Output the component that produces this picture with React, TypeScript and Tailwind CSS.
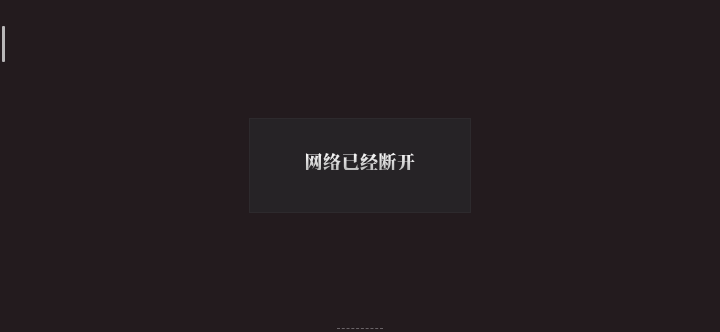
import React from "react";

export default function App() {
  return (
    <div className="relative w-[720px] h-[332px] bg-[#231b1e] overflow-hidden flex items-center justify-center" style={{ fontFamily: '"Noto Serif CJK SC", "Noto Sans CJK SC", sans-serif' }}>
      <div className="absolute left-[2px] top-[26px] w-[3px] h-[36px] bg-[#b9b7b8] rounded-[1px]" />
      <div className="w-[222px] h-[95px] mb-[2px] bg-[#262326] border border-[#2d2a2d] flex items-center justify-center">
        <span className="mb-[9px] text-[18px] font-black leading-none tracking-[0.5px] bg-gradient-to-b from-[#ffffff] to-[#bdbdbd] bg-clip-text text-transparent">
          网络已经断开
        </span>
      </div>
      <div className="absolute left-[337px] bottom-[3px] w-[46px] h-[1px] border-t border-dashed border-[#6a6468]" />
    </div>
  );
}
